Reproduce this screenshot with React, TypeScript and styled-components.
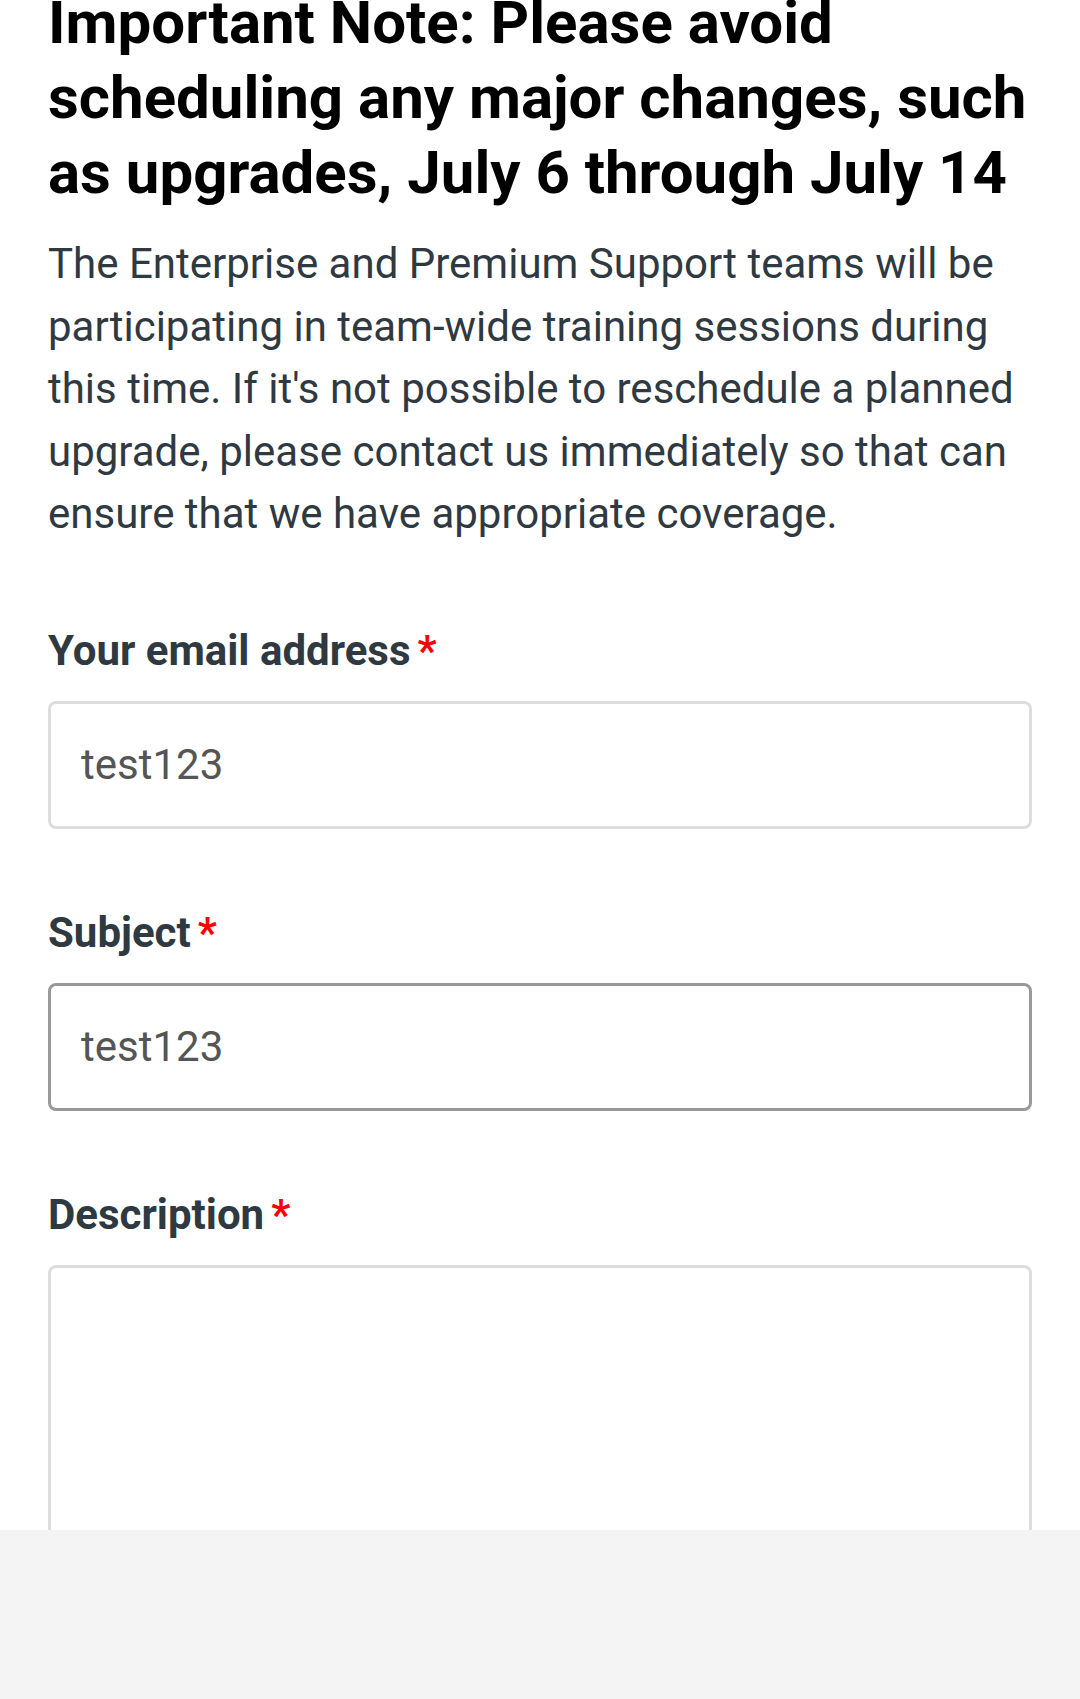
import React from 'react';
import styled, { createGlobalStyle } from 'styled-components';

const GlobalStyle = createGlobalStyle`
  html, body {
    margin: 0;
    padding: 0;
    background: #fff;
  }
  body {
    font-family: Roboto, "Noto Sans", "Liberation Sans", sans-serif;
    -webkit-font-smoothing: antialiased;
  }
`;

const Page = styled.div`
  display: flex;
  flex-direction: column;
  height: 1699px;
  overflow: hidden;
`;

const Viewport = styled.main`
  height: 1530px;
  flex-shrink: 0;
  overflow: hidden;
  padding: 0 48px;
  box-sizing: border-box;
`;

const Tray = styled.div`
  flex: 1;
  background: #f4f4f4;
`;

const Notice = styled.h1`
  margin: -15px 0 0 0;
  font-size: 60px;
  line-height: 75px;
  font-weight: 700;
  color: #000;
`;

const Intro = styled.p`
  margin: 23px 0 0 0;
  font-size: 42px;
  line-height: 62.5px;
  color: #2f3941;
`;

const Form = styled.form`
  display: flex;
  flex-direction: column;
  gap: 79px;
  padding-top: 80px;
`;

const Field = styled.div`
  display: flex;
  flex-direction: column;
  gap: 25px;
`;

const Label = styled.label`
  font-size: 42px;
  line-height: 50px;
  font-weight: 700;
  color: #2f3941;
`;

const Required = styled.span`
  color: #f00;
  margin-left: 7px;
`;

const TextInput = styled.input<{ $focused?: boolean }>`
  display: block;
  width: 100%;
  height: 128px;
  box-sizing: border-box;
  border: 3px solid ${p => (p.$focused ? '#999' : '#ddd')};
  border-radius: 8px;
  padding: 0 30px;
  font-family: inherit;
  font-size: 42px;
  color: #555;
  background: #fff;
  outline: none;
`;

const TextArea = styled.textarea`
  display: block;
  width: 100%;
  height: 420px;
  box-sizing: border-box;
  border: 3px solid #ddd;
  border-radius: 8px;
  padding: 20px 30px;
  font-family: inherit;
  font-size: 42px;
  color: #555;
  background: #fff;
  resize: none;
  outline: none;
`;

export default function App() {
  return (
    <Page>
      <GlobalStyle />
      <Viewport>
        <Notice>
          Important Note: Please avoid scheduling any major changes, such as upgrades, July 6 through July 14
        </Notice>
        <Intro>
          The Enterprise and Premium Support teams will be participating in team-wide training sessions during
          this time. If it's not possible to reschedule a planned upgrade, please contact us immediately so that
          can ensure that we have appropriate coverage.
        </Intro>
        <Form onSubmit={e => e.preventDefault()}>
          <Field>
            <Label htmlFor="email">
              Your email address<Required>*</Required>
            </Label>
            <TextInput id="email" defaultValue="test123" readOnly />
          </Field>
          <Field>
            <Label htmlFor="subject">
              Subject<Required>*</Required>
            </Label>
            <TextInput id="subject" defaultValue="test123" $focused readOnly />
          </Field>
          <Field>
            <Label htmlFor="description">
              Description<Required>*</Required>
            </Label>
            <TextArea id="description" readOnly />
          </Field>
        </Form>
      </Viewport>
      <Tray />
    </Page>
  );
}
